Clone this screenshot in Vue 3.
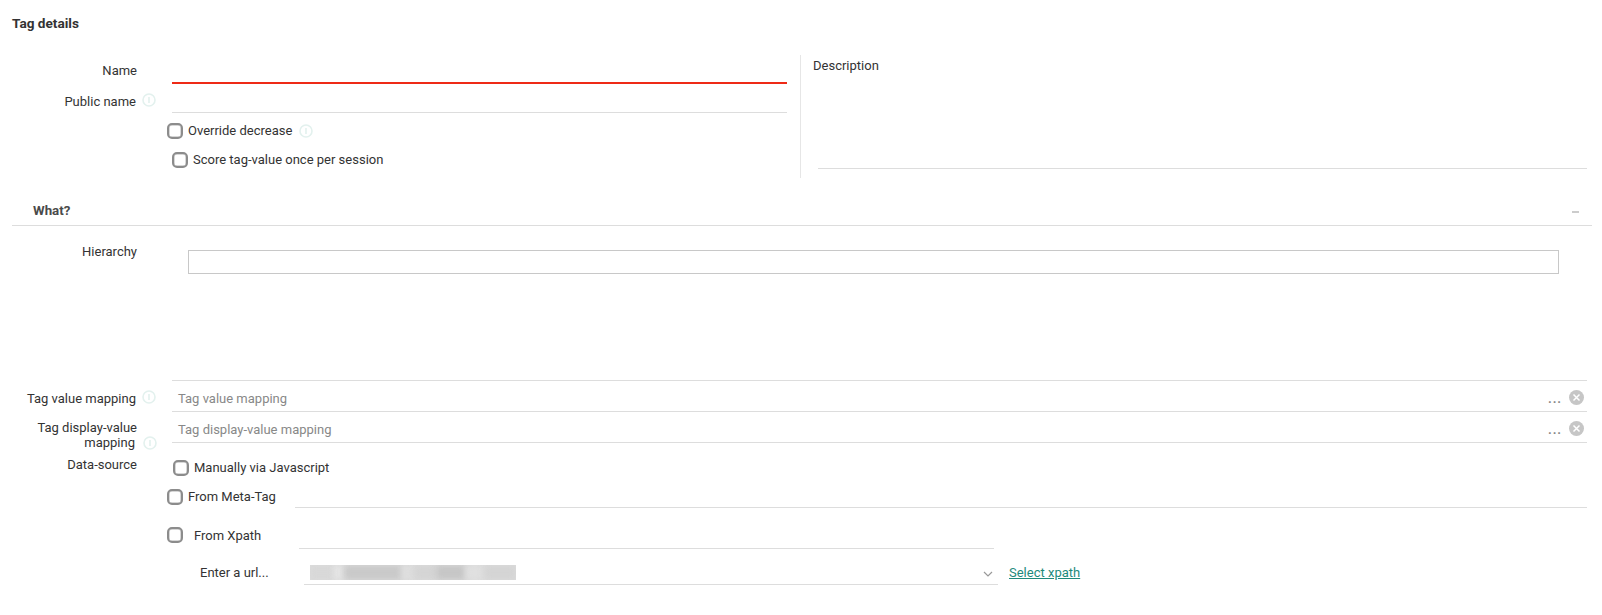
<script setup>
const blurBits = [
  { w: 24, c: '#d8d8d8' }, { w: 10, c: '#e6e6e6' }, { w: 58, c: '#c9c9c9' }, { w: 12, c: '#dedede' },
  { w: 22, c: '#d4d4d4' }, { w: 30, c: '#c6c6c6' }, { w: 18, c: '#e0e0e0' }, { w: 32, c: '#d4d4d4' },
]
</script>

<template>
  <div class="page">
    <h1 class="title">Tag details</h1>

    <section class="details">
      <div class="left">
        <div class="row name-row">
          <label class="lab">Name</label>
          <div class="line red"></div>
        </div>
        <div class="row public-row">
          <label class="lab nudged">Public name</label>
          <svg class="info" viewBox="0 0 14 14"><circle cx="7" cy="7" r="6" /><path d="M7 4v6" /></svg>
          <div class="line"></div>
        </div>
        <div class="check override">
          <span class="box"></span><span>Override decrease</span>
          <svg class="info after" viewBox="0 0 14 14"><circle cx="7" cy="7" r="6" /><path d="M7 4v6" /></svg>
        </div>
        <div class="check score">
          <span class="box"></span><span>Score tag-value once per session</span>
        </div>
      </div>
      <div class="right">
        <div class="desc-label">Description</div>
        <div class="desc-line"></div>
      </div>
    </section>

    <div class="what">
      <span>What?</span>
      <span class="minus"></span>
    </div>

    <div class="hierarchy">
      <label class="lab">Hierarchy</label>
      <div class="hier-input"></div>
    </div>

    <div class="mapping first">
      <label class="lab nudged">Tag value mapping</label>
      <svg class="info" viewBox="0 0 14 14"><circle cx="7" cy="7" r="6" /><path d="M7 4v6" /></svg>
      <div class="map-field">
        <span class="ph">Tag value mapping</span>
        <span class="dots">...</span>
        <svg class="clear" viewBox="0 0 14 14"><circle cx="7" cy="7" r="7" /><path d="M4.2 4.2l5.6 5.6M9.8 4.2l-5.6 5.6" /></svg>
      </div>
    </div>
    <div class="mapping second">
      <label class="lab two-line">Tag display-value<br /><span class="nudge-text">mapping</span></label>
      <svg class="info low" viewBox="0 0 14 14"><circle cx="7" cy="7" r="6" /><path d="M7 4v6" /></svg>
      <div class="map-field">
        <span class="ph">Tag display-value mapping</span>
        <span class="dots">...</span>
        <svg class="clear" viewBox="0 0 14 14"><circle cx="7" cy="7" r="7" /><path d="M4.2 4.2l5.6 5.6M9.8 4.2l-5.6 5.6" /></svg>
      </div>
    </div>

    <div class="source-row">
      <label class="lab">Data-source</label>
      <div class="check manual"><span class="box"></span><span>Manually via Javascript</span></div>
    </div>
    <div class="meta-row">
      <div class="check"><span class="box"></span><span>From Meta-Tag</span></div>
      <div class="meta-line"></div>
    </div>
    <div class="xpath-row">
      <div class="check"><span class="box"></span><span class="xpath-text">From Xpath</span></div>
      <div class="xpath-line"></div>
    </div>
    <div class="url-row">
      <span class="url-label">Enter a url...</span>
      <div class="url-field">
        <div class="blur"><span v-for="(b, i) in blurBits" :key="i" class="bit" :style="{ width: b.w + 'px', background: b.c }"></span></div>
        <svg class="chev" viewBox="0 0 10 6"><path d="M1 1l4 4 4-4" /></svg>
      </div>
      <a class="link" href="#" @click.prevent>Select xpath</a>
    </div>
  </div>
</template>

<style scoped>
.page {
  width: 1602px;
  height: 615px;
  overflow: hidden;
  box-sizing: border-box;
  padding: 15px 0 0 0;
  font-family: Roboto, "Liberation Sans", sans-serif;
  font-size: 13px;
  line-height: 15px;
  color: #333;
  background: #fff;
}
.title {
  margin: 0 0 0 12px;
  font-size: 13.6px;
  line-height: 16px;
  font-weight: 700;
  color: #333;
}
.details {
  display: flex;
  margin-top: 24px;
  height: 123px;
}
.left {
  width: 800px;
  height: 123px;
  border-right: 1px solid #e6e6e6;
}
.right {
  flex: 1;
  padding-left: 12px;
}
.row {
  display: flex;
  align-items: flex-start;
  position: relative;
}
.lab {
  width: 137px;
  flex: none;
  text-align: right;
  color: #333;
}
.lab.nudged {
  width: 136px;
}
.name-row {
  height: 29px;
  padding-top: 8px;
  box-sizing: border-box;
}
.line {
  position: absolute;
  left: 172px;
  right: 13px;
  bottom: 0;
  height: 1px;
  background: #ddd;
}
.line.red {
  height: 2px;
  background: #ee2a16;
}
.public-row {
  height: 29px;
  padding-top: 10px;
  box-sizing: border-box;
}
.info {
  width: 14px;
  height: 14px;
  flex: none;
  margin-left: 6px;
  fill: none;
  stroke: #e3f1ee;
  stroke-width: 1.6;
}
.public-row .info {
  margin-top: -1px;
}
.info.after {
  margin-left: 7px;
}
.check {
  display: flex;
  align-items: center;
  height: 15px;
  white-space: nowrap;
}
.box {
  width: 16px;
  height: 16px;
  flex: none;
  box-sizing: border-box;
  border: 2px solid #8c8c8c;
  border-radius: 5px;
  box-shadow: inset 0 0 0 0.5px #b0b0b0;
  margin-right: 5px;
  background: #fff;
}
.override {
  margin: 10px 0 0 167px;
}
.score {
  margin: 14px 0 0 172px;
}
.desc-label {
  margin: 3px 0 0 0;
}
.desc-line {
  height: 1px;
  background: #ddd;
  margin: 95px 15px 0 5px;
}
.what {
  display: flex;
  align-items: center;
  justify-content: space-between;
  margin: 18px 10px 0 12px;
  height: 30px;
  padding: 0 13px 0 21px;
  box-sizing: border-box;
  border-bottom: 1px solid #ddd;
  font-size: 13.3px;
  font-weight: 700;
  color: #4a4a4a;
}
.minus {
  width: 7px;
  height: 2px;
  background: #ccc;
  margin-top: 2px;
}
.hierarchy {
  display: flex;
  align-items: flex-start;
  margin-top: 19px;
  height: 136px;
}
.hierarchy .lab {
  margin-top: -1px;
}
.hier-input {
  margin: 5px 0 0 51px;
  width: 1371px;
  height: 24px;
  box-sizing: border-box;
  border: 1px solid #c8c8c8;
}
.mapping {
  display: flex;
  align-items: flex-start;
  height: 31px;
  position: relative;
}
.mapping.first .lab {
  padding-top: 10px;
}
.mapping.first .info {
  margin-top: 9px;
}
.map-field {
  position: absolute;
  left: 172px;
  right: 15px;
  top: 0;
  bottom: 0;
  display: flex;
  align-items: center;
  padding: 4px 3px 0 6px;
  box-sizing: border-box;
  border-bottom: 1px solid #ddd;
}
.mapping.first .map-field {
  border-top: 1px solid #ddd;
  top: -1px;
  height: 32px;
}
.ph {
  color: #888;
  flex: 1;
}
.dots {
  color: #888;
  font-weight: 700;
  letter-spacing: 0.9px;
  margin: 0 7px 0 0;
  position: relative;
  top: 0;
}
.clear {
  width: 15px;
  height: 15px;
  flex: none;
  fill: #c6c6c6;
  stroke: none;
  margin-bottom: 1px;
}
.clear path {
  fill: none;
  stroke: #fff;
  stroke-width: 1.4;
}
.lab.two-line {
  margin-top: 8px;
}
.nudge-text {
  margin-right: 2px;
}
.info.low {
  margin-top: 24px;
}
.source-row {
  display: flex;
  align-items: flex-start;
  height: 31px;
  margin-top: 14px;
}
.manual {
  margin: 3px 0 0 36px;
}
.meta-row,
.xpath-row {
  position: relative;
  display: flex;
  align-items: flex-start;
  padding-left: 167px;
}
.meta-row {
  height: 38px;
  margin-top: 1px;
}
.meta-line {
  position: absolute;
  left: 295px;
  width: 1292px;
  height: 1px;
  margin-top: 18px;
  background: #ddd;
}
.xpath-row {
  height: 38px;
}
.xpath-text {
  margin-left: 6px;
  position: relative;
  top: 1px;
}
.xpath-line {
  position: absolute;
  left: 299px;
  width: 695px;
  height: 1px;
  margin-top: 21px;
  background: #ddd;
}
.url-row {
  display: flex;
  align-items: flex-start;
}
.url-label {
  margin-left: 200px;
  width: 104px;
  flex: none;
}
.url-field {
  width: 694px;
  height: 24px;
  flex: none;
  margin-top: -4px;
  display: flex;
  align-items: flex-start;
  justify-content: space-between;
  box-sizing: border-box;
  border-bottom: 1px solid #ddd;
  padding: 4px 5px 0 6px;
}
.blur {
  display: flex;
  width: 206px;
  height: 15px;
  background: #dcdcdc;
  overflow: hidden;
}
.bit {
  height: 15px;
  flex: none;
  filter: blur(3px);
}
.chev {
  width: 10px;
  height: 6px;
  margin-top: 6px;
  fill: none;
  stroke: #999;
  stroke-width: 1.2;
}
.link {
  margin-left: 11px;
  color: #1e8a7c;
  text-decoration: underline;
}
</style>

<style>
html, body { margin: 0; background: #fff; }
</style>
